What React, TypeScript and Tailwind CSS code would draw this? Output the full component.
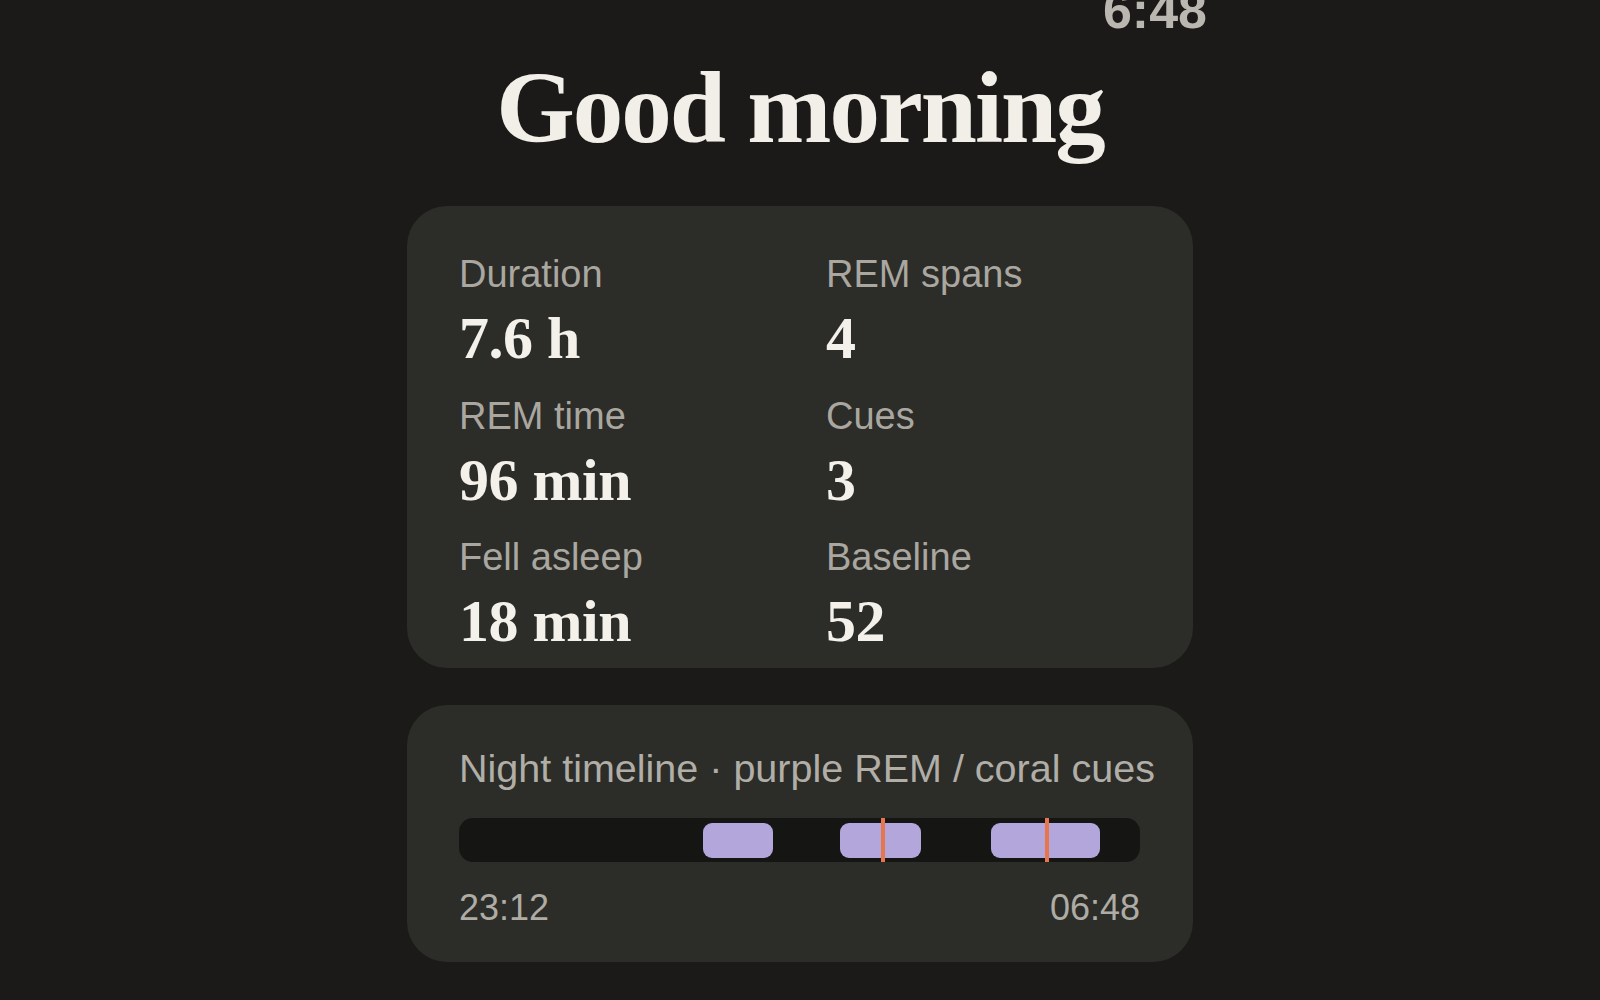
import React from 'react';

const stats = [
    { label: 'Duration', value: '7.6 h' },
    { label: 'REM spans', value: '4' },
    { label: 'REM time', value: '96 min' },
    { label: 'Cues', value: '3' },
    { label: 'Fell asleep', value: '18 min' },
    { label: 'Baseline', value: '52' },
];

// positions along the night, in % of the bar
const remSpans = [
    { left: 35.8, width: 10.3 },
    { left: 55.9, width: 12.0 },
    { left: 78.1, width: 16.0 },
];
const cues = [62.3, 86.3];

const sans = "font-['Liberation_Sans',Arial,sans-serif]";
const serif = "font-['Liberation_Serif','Times_New_Roman',serif]";

const App: React.FC = () => {
    return (
        <div className="min-h-screen w-full overflow-hidden bg-[#1b1a19]">
            <div className="mx-auto flex w-[814px] justify-end">
                <span className={`${sans} -mt-[16px] text-[52px] font-bold leading-none text-[#b9b7af]`}>6:48</span>
            </div>

            <h1 className={`${serif} mt-[22px] text-center text-[101px] font-bold leading-none tracking-[-2px] text-[#f1efe7]`}>
                Good morning
            </h1>

            <section className="mx-auto mt-[47px] w-[786px] rounded-[40px] bg-[#2c2c29] pb-[12px] pl-[52px] pr-[53px] pt-[45px]">
                <div className="grid grid-cols-[367px_1fr] gap-y-[19.5px]">
                    {stats.map((s) => (
                        <div key={s.label} className="flex flex-col gap-[6px]">
                            <span className={`${sans} text-[38px] leading-[46px] text-[#a9a79f]`}>{s.label}</span>
                            <span className={`${serif} text-[60px] font-bold leading-[70px] tracking-[-0.5px] text-[#f3f1ea]`}>
                                {s.value}
                            </span>
                        </div>
                    ))}
                </div>
            </section>

            <section className="mx-auto mt-[37px] w-[786px] rounded-[40px] bg-[#2c2c29] pb-[32px] pl-[52px] pr-[53px] pt-[39px]">
                <div className={`${sans} whitespace-nowrap text-[39.5px] leading-[48px] text-[#b0aea6]`}>
                    Night timeline · purple REM / coral cues
                </div>
                <div className="relative mt-[26px] h-[44px] rounded-[14px] bg-[#151513]">
                    {remSpans.map((r, i) => (
                        <div
                            key={i}
                            className="absolute bottom-[4px] top-[5px] rounded-[9px] bg-[#b3a6da]"
                            style={{ left: `${r.left}%`, width: `${r.width}%` }}
                        />
                    ))}
                    {cues.map((c, i) => (
                        <div
                            key={i}
                            className="absolute bottom-0 top-0 w-[4px] -translate-x-1/2 bg-[#e8764c]"
                            style={{ left: `${c}%` }}
                        />
                    ))}
                </div>
                <div className={`${sans} mt-[24px] flex justify-between text-[36px] leading-[44px] text-[#aeaca4]`}>
                    <span>23:12</span>
                    <span>06:48</span>
                </div>
            </section>
        </div>
    );
};

export default App;
